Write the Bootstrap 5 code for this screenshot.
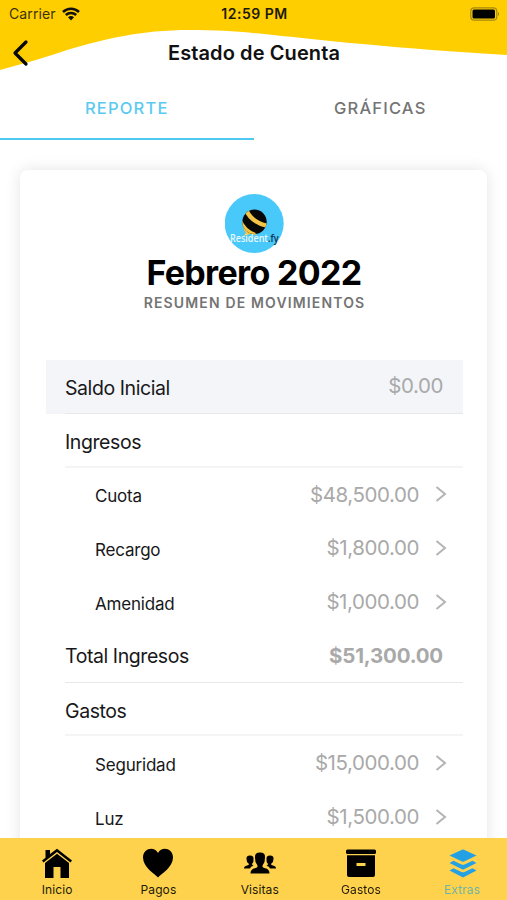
<!DOCTYPE html>
<html lang="es">
<head>
<meta charset="utf-8">
<meta name="viewport" content="width=device-width, initial-scale=1">
<title>Estado de Cuenta</title>
<link href="https://cdn.jsdelivr.net/npm/bootstrap@5.3.0/dist/css/bootstrap.min.css" rel="stylesheet">
<style>
body{font-family:Inter,"Liberation Sans",sans-serif;height:900px;color:#18181a;line-height:1.2}
.screen{height:900px;background:#fff;white-space:nowrap}
.wave{left:0;top:0;z-index:0}
.status{height:28px;padding:0 7px 0 9px;font-size:14px;color:#1d1a08}
.status>div{flex:1 1 0}
.carrier{letter-spacing:.1px;color:#3b330c}
.wifi{margin-left:6px}
.clock{font-size:14px;font-weight:600;letter-spacing:.5px}
.titlebar{height:49px;padding-left:12px}
.titlebar h1{font-size:20px;font-weight:600;letter-spacing:.1px;color:#111;margin:0;padding-right:28px}
.tabs{height:63px}
.tab-item{width:50%;height:63px;padding-top:22px;font-size:16.5px;letter-spacing:1.2px;font-weight:500;text-align:center;color:#747474;border-bottom:2px solid transparent}
.tab-item.active{color:#5bcaf1;border-color:#4fc9f2}
.statement{margin:30px 20px 0;height:700px;border-radius:8px;background:#fff;box-shadow:0 0 16px rgba(0,0,0,.11);padding:24px 24px 0 26px}
.month{font-size:34px;font-weight:700;letter-spacing:-.65px;color:#000;line-height:38px;margin:0;padding-right:1px}
.subtitle{font-size:14px;font-weight:600;letter-spacing:1.15px;color:#747474;line-height:22px}
.rows{margin-top:46px}
.line{height:53.75px;padding-left:19px}
.line>div{height:100%;padding-right:20px;border-bottom:1px solid transparent}
.line.ruled>div{border-color:#e7e8ea}
.line.ruled.soft>div{border-bottom:2px solid #f4f4f5}
.line.shade{background:#f3f5f9}
.line.sub{padding-left:49px}
.line.sub>div{padding:2px 16px 0 0}
.name{font-size:19.5px;letter-spacing:-.42px;padding-top:4px}
.soft .name{padding-top:6px}
.sub .name{font-size:17px;letter-spacing:-.2px;padding-top:3px}
.amount{font-size:20.5px;color:#a9a9a9;letter-spacing:-.42px;padding-bottom:1px}
.sub .amount,.amount.total{padding-bottom:0}
.amount.total{font-weight:700;letter-spacing:-.2px;padding-top:2px}
.chev{margin-left:16px;margin-bottom:1px}
.dock{height:62px;background:#ffd24d;z-index:3;padding-left:6.5px}
.dock-item{flex:0 0 101.3px;padding-top:10px;font-size:12px;line-height:16px;color:#201a08;letter-spacing:.1px}
.dock-item svg{height:32px;width:34px;display:block;margin-bottom:1.5px}
.dock-item.active{color:#6eb3a4}
</style>
<script src="https://cdn.jsdelivr.net/npm/bootstrap@5.3.0/dist/js/bootstrap.bundle.min.js"></script>
</head>
<body class="overflow-hidden">
<div class="screen position-relative overflow-hidden">
<svg class="wave position-absolute" width="507" height="72" viewBox="0 0 507 72"><path d="M0 0H507V55C400 49 320 40 253 33C235 31 215 30 190 30C140 30 105 39 67 50C50 56 30 62 0 70Z" fill="#ffce00"/></svg>
<header class="position-relative">
<div class="status d-flex align-items-center">
<div class="d-flex align-items-center carrier">Carrier
<svg class="wifi" width="18" height="14" viewBox="0 0 18 14" fill="none" stroke="#111" stroke-width="2.500"><path d="M1 5C5.500.6 12.500.6 17 5M3.800 8C6.800 5.200 11.200 5.200 14.200 8"/><path d="M6 10.200Q9 7.800 12 10.200L9 13.400Z" fill="#111" stroke="none"/></svg></div>
<div class="clock text-center">12:59 PM</div>
<div class="d-flex justify-content-end"><svg width="30" height="14" viewBox="0 0 30 14"><rect x=".8" y=".8" width="26" height="12.400" rx="3.500" fill="none" stroke="#a58712" stroke-width="1.200"/><rect x="2.500" y="2.600" width="22.500" height="8.800" rx="1.500"/><path d="M28 5Q30 7 28 9Z" fill="#957a10"/></svg></div>
</div>
<div class="titlebar position-relative d-flex align-items-center">
<svg width="17" height="28" viewBox="0 0 17 28" fill="none" stroke="#080808" stroke-width="3.200" stroke-linecap="round" stroke-linejoin="round"><path d="M14 3L3 14L14 25"/></svg>
<h1 class="flex-grow-1 text-center">Estado de Cuenta</h1>
</div>
</header>
<nav class="tabs d-flex position-relative"><div class="tab-item active">REPORTE</div><div class="tab-item">GRÁFICAS</div></nav>
<main class="statement">
<div class="text-center">
<svg class="d-block mx-auto" width="60" height="60" viewBox="0 0 60 60"><circle cx="29.200" cy="29.500" r="29.500" fill="#49c8fa"/><defs><clipPath id="bee"><circle cx="29.500" cy="27.800" r="12.200"/></clipPath></defs><path d="M18 30Q18 36 21 39L18 42L25 40L32 41Z" fill="#f4c445"/><g clip-path="url(#bee)"><path d="M16 14H43V42H16Z" fill="#080808"/><path d="M20.500 14Q25 28 43 32M15 27Q19 37 30 41" fill="none" stroke="#f4c445" stroke-width="4.400"/></g><text x="5" y="47.500" font-family="Open Sans" font-size="10" font-weight="600" fill="#e9f8ff" textLength="48.500" lengthAdjust="spacingAndGlyphs">Resident<tspan fill="#10324a">.fy</tspan></text></svg>
<h2 class="month">Febrero 2022</h2>
<div class="subtitle">RESUMEN DE MOVIMIENTOS</div>
</div>
<div class="rows">
<div class="line ruled shade"><div class="d-flex align-items-center justify-content-between"><span class="name">Saldo Inicial</span><span class="amount">$0.00</span></div></div>
<div class="line ruled soft"><div class="d-flex align-items-center"><span class="name">Ingresos</span></div></div>
<div class="line sub"><div class="d-flex align-items-center"><span class="name">Cuota</span><span class="amount ms-auto">$48,500.00</span><svg class="chev" width="12" height="18" viewBox="0 0 12 18" fill="none" stroke="#b4b4b4" stroke-width="2"><path d="M1.500 2L10 9L1.500 16"/></svg></div></div>
<div class="line sub"><div class="d-flex align-items-center"><span class="name">Recargo</span><span class="amount ms-auto">$1,800.00</span><svg class="chev" width="12" height="18" viewBox="0 0 12 18" fill="none" stroke="#b4b4b4" stroke-width="2"><path d="M1.500 2L10 9L1.500 16"/></svg></div></div>
<div class="line sub"><div class="d-flex align-items-center"><span class="name">Amenidad</span><span class="amount ms-auto">$1,000.00</span><svg class="chev" width="12" height="18" viewBox="0 0 12 18" fill="none" stroke="#b4b4b4" stroke-width="2"><path d="M1.500 2L10 9L1.500 16"/></svg></div></div>
<div class="line ruled"><div class="d-flex align-items-center justify-content-between"><span class="name">Total Ingresos</span><span class="amount total">$51,300.00</span></div></div>
<div class="line ruled soft"><div class="d-flex align-items-center"><span class="name">Gastos</span></div></div>
<div class="line sub"><div class="d-flex align-items-center"><span class="name">Seguridad</span><span class="amount ms-auto">$15,000.00</span><svg class="chev" width="12" height="18" viewBox="0 0 12 18" fill="none" stroke="#b4b4b4" stroke-width="2"><path d="M1.500 2L10 9L1.500 16"/></svg></div></div>
<div class="line sub"><div class="d-flex align-items-center"><span class="name">Luz</span><span class="amount ms-auto">$1,500.00</span><svg class="chev" width="12" height="18" viewBox="0 0 12 18" fill="none" stroke="#b4b4b4" stroke-width="2"><path d="M1.500 2L10 9L1.500 16"/></svg></div></div>
</div>
</main>
<nav class="dock fixed-bottom d-flex">
<div class="dock-item d-flex flex-column align-items-center"><svg viewBox="0 0 34 32"><path d="M5.500 2H10V6L17 .8L32 12.500L30.500 14.500L17 4L3.500 14.500L2 12.500L5.500 9.700Z"/><path d="M5 15L17 5.800L29 15V30H20.500V19H13.500V30H5Z"/></svg><span>Inicio</span></div>
<div class="dock-item d-flex flex-column align-items-center"><svg viewBox="0 0 34 32"><path d="M17 29.500C14 26 2 19.500 2 9.500C2 .500 13-2.500 17 5C21-2.500 32 .500 32 9.500C32 19.500 20 26 17 29.500Z"/></svg><span>Pagos</span></div>
<div class="dock-item d-flex flex-column align-items-center"><svg viewBox="0 0 34 32"><path d="M1 20.500Q1 18 4 17.500Q6 17 6 16Q3.300 14 3.500 11Q3 7.500 7 7.500Q11 7.500 10.500 11Q11 14 9 16Q9 17.200 10.500 17.700Q7.500 18.500 7 20.500Z"/><path d="M33 20.500Q33 18 30 17.500Q28 17 28 16Q30.700 14 30.500 11Q31 7.500 27 7.500Q23 7.500 23.500 11Q23 14 25 16Q25 17.200 23.500 17.700Q26.500 18.500 27 20.500Z"/><path d="M7.500 25.500Q7.500 21 12 20.300Q15 19.500 14.500 17.500Q11.700 14 12 9.500Q11.500 4.500 17 4.500Q22.500 4.500 22 9.500Q22.300 14 19.500 17.500Q19 19.500 22 20.300Q26.500 21 26.500 25.500Z"/></svg><span>Visitas</span></div>
<div class="dock-item d-flex flex-column align-items-center"><svg viewBox="0 0 34 32"><rect x="2" y="1.500" width="30" height="4.500" rx="1.500"/><path fill-rule="evenodd" d="M3 7.300H31V27Q31 29 29 29H5Q3 29 3 27ZM12.500 15V18H21.500V15Z"/></svg><span>Gastos</span></div>
<div class="dock-item active d-flex flex-column align-items-center"><svg viewBox="0 0 34 32" fill="#24a0e5"><path d="M17 1.700Q18 1.200 19 1.700L31.500 7.500L19 13.500Q18 14 17 13.500L4.500 7.500Z"/><path d="M4.500 15L8.500 12.800L16.500 16.500Q18 17 19.500 16.500L27.500 12.800L31.500 15L19 21.300Q18 21.800 17 21.300Z"/><path d="M4.500 22.500L8.500 20.300L16.500 24Q18 24.500 19.500 24L27.500 20.300L31.500 22.500L19 29Q18 29.500 17 29Z"/></svg><span>Extras</span></div>
</nav>
</div>
</body>
</html>
